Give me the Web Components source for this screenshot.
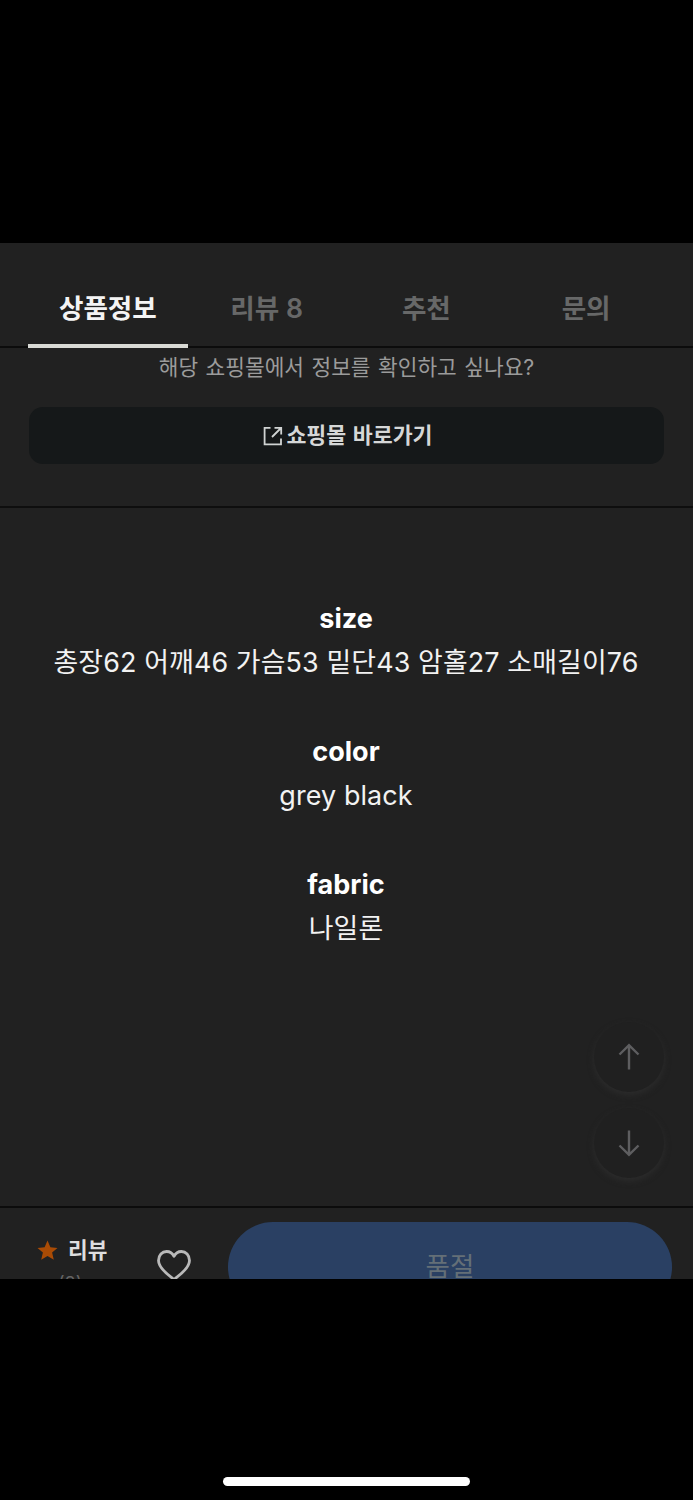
<!DOCTYPE html>
<html lang="ko">
<head>
<meta charset="utf-8">
<meta name="viewport" content="width=device-width">
<title>상품정보</title>
<style>
html,body{margin:0;background:#000}
body{font-family:Inter,"Noto Sans CJK KR",sans-serif;-webkit-font-smoothing:antialiased}
</style>
</head>
<body>
<product-screen></product-screen>
<script>
const define=(name,html)=>customElements.define(name,class extends HTMLElement{
  constructor(){super();this.attachShadow({mode:'open'}).innerHTML=html;}
});

define('tab-item',`<style>
:host{height:105px;box-sizing:border-box;display:flex;justify-content:center;padding:45px 2px 0 0;
font-size:26.6px;line-height:40px;font-weight:600;color:#676868;border-bottom:4px solid transparent;white-space:pre}
:host([active]){color:#f4f4f4;border-bottom-color:#d9dad5;padding-right:0}
</style><slot></slot>`);

define('tab-bar',`<style>
:host{display:grid;grid-template-columns:repeat(4,minmax(0,1fr));height:105px;box-sizing:border-box;padding:0 26px 0 28px;background:linear-gradient(#0c0c0c,#0c0c0c) 0 103px/100% 2px no-repeat}
</style><slot></slot>`);

define('shop-link',`<style>
:host{display:block;height:160px;box-sizing:border-box;border-bottom:2px solid #0e0e0e;padding:0 29px}
p{margin:0;padding-top:4px;height:55px;box-sizing:border-box;text-align:center;font-size:21.4px;line-height:30px;color:#9b9b9b;word-spacing:1.5px}
button{all:unset;box-sizing:border-box;padding-left:3px;display:flex;align-items:center;justify-content:center;gap:3px;margin-top:4px;width:100%;height:57px;border-radius:14px;background:#151819;color:#d5d7d7;font-size:21.7px;font-weight:600;line-height:30px;word-spacing:1px}
button span{margin-top:-1px}
svg{display:block}
</style>
<p><slot name="question"></slot></p>
<button><svg width="20" height="20" viewBox="0 0 20 20" fill="none" stroke="#d0d3d3" stroke-width="1.8"><path d="M7.5 1.8H1.6V18.4H18V12.5M11.5 1.8H18.2V8.5M18 2L9 11"/></svg><span><slot></slot></span></button>`);

define('detail-block',`<style>
:host{display:block;text-align:center;color:#f2f2f2;height:133.2px}
h2{margin:0 1px 0 0;padding-top:1px;font-size:27px;font-weight:700;line-height:44px;height:44px;box-sizing:border-box;color:#fff}
p{margin:0 1px 0 0;font-size:26.9px;letter-spacing:.12px;line-height:44px;white-space:nowrap}
</style><h2><slot name="title"></slot></h2><p><slot></slot></p>`);

define('scroll-button',`<style>
:host{display:flex;width:70px;height:70px;border-radius:50%;align-items:center;justify-content:center;background:#202020;box-shadow:0 3px 6px #2c2c2c}
svg{display:block}
:host([down]) svg{transform:rotate(180deg)}
</style><svg width="22" height="28" viewBox="0 0 22 28" fill="none" stroke="#5e5e60" stroke-width="2.4"><path d="M11 26.5V2.5M1.5 11.5L11 2.2L20.5 11.5"/></svg>`);

define('review-link',`<style>
:host{display:flex;flex-direction:column;width:112px;padding:26px 0 0 0;box-sizing:border-box}
.row{display:flex;flex:none;align-items:center;gap:10px;padding-left:37px;height:32px;font-size:21.4px;font-weight:600;color:#dededf}
.row span{margin-top:-4px}
svg{display:block;margin-top:1px}
small{font-size:18px;line-height:24px;color:#656565;padding-left:58px;margin-top:6px}
</style><div class="row"><svg width="21" height="21" viewBox="0 0 21 21"><path fill="#a94b05" d="M10.5.5L13.4 7.2L20.5 7.9L15.1 12.6L16.8 19.8L10.5 16L4.2 19.8L5.9 12.6L.5 7.9L7.6 7.2Z"/></svg><span><slot></slot></span></div><small><slot name="count"></slot></small>`);

define('like-button',`<style>
:host{display:block;padding:42px 0 0 45px;width:71px}
svg{display:block}
</style><svg width="34" height="32" viewBox="0 0 34 32" fill="none" stroke="#b9b9b9" stroke-width="2.8" stroke-linejoin="round"><path d="M17 29.5C13.5 26.5 1.5 19 1.5 10.5C1.5 5.3 5.2 1.5 9.6 1.5C12.7 1.5 15.5 3.3 17 6.3C18.5 3.3 21.3 1.5 24.4 1.5C28.8 1.5 32.5 5.3 32.5 10.5C32.5 19 20.5 26.5 17 29.5Z"/></svg>`);

define('buy-button',`<style>
:host{display:block;margin-top:14px;width:444px;height:90px;border-radius:45px;background:#2a4063;color:#646f77;text-align:center;font-size:26.5px;line-height:89px}
</style><slot></slot>`);

define('bottom-bar',`<style>
:host{display:flex;height:73px;box-sizing:border-box;overflow:hidden;border-top:2px solid #0c0c0c}
</style><slot></slot>`);

define('product-screen',`<style>
:host{display:block;width:693px;height:1500px;background:#000;box-sizing:border-box;padding-top:243px;position:relative}
main{height:1036px;background:#212121;overflow:hidden}
.details{height:698px;box-sizing:border-box;padding-top:88px}
.float{position:absolute;left:594px;top:1022px;display:flex;flex-direction:column;gap:16px}
.home{width:247px;height:9px;border-radius:5px;background:#fff;margin:198px 0 0 223px}
</style>
<main>
<tab-bar><tab-item active>상품정보</tab-item><tab-item>리뷰 8</tab-item><tab-item>추천</tab-item><tab-item>문의</tab-item></tab-bar>
<shop-link><span slot="question">해당 쇼핑몰에서 정보를 확인하고 싶나요?</span>쇼핑몰 바로가기</shop-link>
<section class="details">
<detail-block><span slot="title">size</span>총장62 어깨46 가슴53 밑단43 암홀27 소매길이76</detail-block>
<detail-block><span slot="title">color</span>grey black</detail-block>
<detail-block><span slot="title">fabric</span>나일론</detail-block>
</section>
<bottom-bar><review-link>리뷰<span slot="count">(8)</span></review-link><like-button></like-button><buy-button>품절</buy-button></bottom-bar>
</main>
<div class="float"><scroll-button></scroll-button><scroll-button down></scroll-button></div>
<div class="home"></div>`);
</script>
</body>
</html>
